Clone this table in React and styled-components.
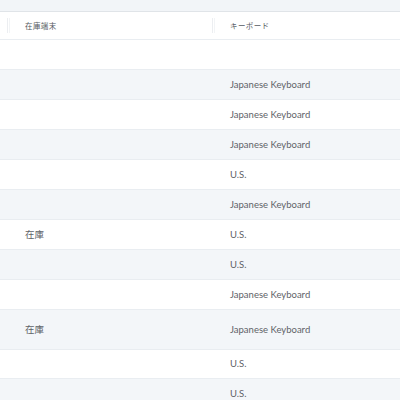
import React from 'react';
import styled, {createGlobalStyle} from 'styled-components';

const GlobalStyle = createGlobalStyle`
    html, body {
        margin: 0;
        padding: 0;
        background: #ffffff;
    }
    body {
        font-family: Lato, "Noto Sans CJK JP", sans-serif;
        overflow: hidden;
    }
`;

const Page = styled.div`
    width: 400px;
    height: 400px;
    overflow: hidden;
    background: #f2f5f8;
    padding-top: 11px;
    box-sizing: border-box;
`;

const Table = styled.div`
    background: #ffffff;
    border-top: 1px solid #e0e4e8;
`;

const HeaderRow = styled.div`
    display: grid;
    grid-template-columns: 9px 205px 1fr;
    height: 27px;
    background: #ffffff;
`;

const HeaderCell = styled.div`
    position: relative;
    display: flex;
    align-items: center;
    padding-left: 16px;
    padding-bottom: 1px;
    font-size: 7.5px;
    letter-spacing: 0.4px;
    color: #555b62;

    &::before{
        content: '';
        position: absolute;
        left: -2px;
        top: 6px;
        height: 15px;
        width: 3px;
        border-left: 1px solid #eceef1;
        border-right: 1px solid #f2f4f6;
        box-sizing: border-box;
    }
`;

const Row = styled.div`
    display: grid;
    grid-template-columns: 9px 205px 1fr;
    height: ${props => props.$height || 30}px;
    background: ${props => props.$striped ? '#f3f6f9' : '#ffffff'};
    border-top: 1px solid #e9edf1;
    box-sizing: border-box;
`;

const Cell = styled.div`
    display: flex;
    align-items: center;
    padding-left: 16px;
    padding-bottom: 1px;
    font-size: 9.5px;
    color: #5f6368;
    white-space: nowrap;
`;

const rows = [
    {stock: '', keyboard: ''},
    {stock: '', keyboard: 'Japanese Keyboard'},
    {stock: '', keyboard: 'Japanese Keyboard'},
    {stock: '', keyboard: 'Japanese Keyboard'},
    {stock: '', keyboard: 'U.S.'},
    {stock: '', keyboard: 'Japanese Keyboard'},
    {stock: '在庫', keyboard: 'U.S.'},
    {stock: '', keyboard: 'U.S.'},
    {stock: '', keyboard: 'Japanese Keyboard'},
    {stock: '在庫', keyboard: 'Japanese Keyboard', height: 40},
    {stock: '', keyboard: 'U.S.', height: 29},
    {stock: '', keyboard: 'U.S.'},
];

export default function App() {
    return (
        <Page>
            <GlobalStyle />
            <Table>
                <HeaderRow>
                    <div />
                    <HeaderCell>在庫端末</HeaderCell>
                    <HeaderCell>キーボード</HeaderCell>
                </HeaderRow>
                {
                    rows.map((row, i) =>
                        <Row key={i} $striped={i % 2 === 1} $height={row.height}>
                            <div />
                            <Cell>{row.stock}</Cell>
                            <Cell>{row.keyboard}</Cell>
                        </Row>
                    )
                }
            </Table>
        </Page>
    );
}
